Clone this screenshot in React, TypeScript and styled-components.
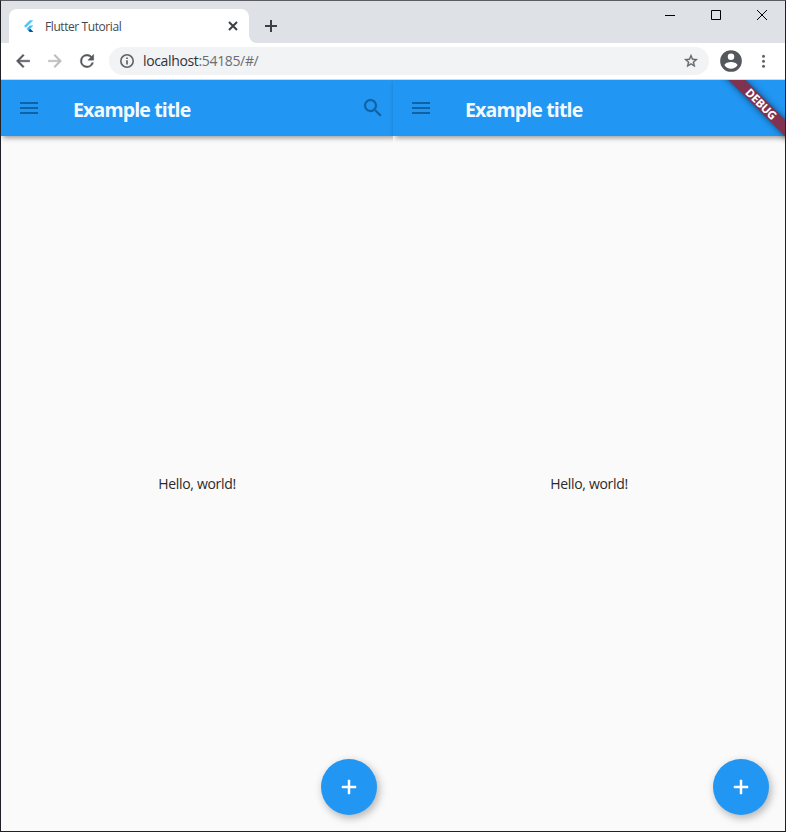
import React from "react";
import styled, { createGlobalStyle } from "styled-components";

const GlobalStyle = createGlobalStyle`
  * { box-sizing: border-box; }
  body { margin: 0; background: #fafafa; font-family: "Open Sans", "Noto Sans", sans-serif; }
`;

const Window = styled.div`
  width: 786px;
  height: 832px;
  display: flex;
  flex-direction: column;
  overflow: hidden;
  border: 1px solid #1e2026;
  border-top-color: #5b5c61;
`;

const TabStrip = styled.div`
  height: 42px;
  flex: none;
  display: flex;
  align-items: flex-end;
  background: #dee1e6;
`;

const Tab = styled.div`
  width: 240px;
  height: 34px;
  margin-left: 8px;
  display: flex;
  align-items: center;
  padding: 0 10px 0 13px;
  border-radius: 8px 8px 0 0;
  background: #fff;
`;

const TabCurve = styled.svg`
  width: 8px;
  height: 8px;
  display: block;
  flex: none;
`;

const TabTitle = styled.span`
  flex: 1;
  margin: 2px 0 0 9px;
  font-size: 12px;
  line-height: 16px;
  letter-spacing: -0.42px;
  color: #45494d;
  white-space: nowrap;
`;

const Glyph = styled.svg<{ $w: number; $h?: number }>`
  display: block;
  flex: none;
  width: ${(p) => p.$w}px;
  height: ${(p) => p.$h ?? p.$w}px;
`;

const NewTab = styled.div`
  margin-left: 8px;
  align-self: center;
  padding-top: 8px;
`;

const WindowControls = styled.div`
  margin-left: auto;
  align-self: flex-start;
  display: flex;
  height: 28px;
`;

const ControlButton = styled.div`
  width: 46px;
  display: flex;
  align-items: center;
  justify-content: center;
`;

const Toolbar = styled.div`
  height: 37px;
  flex: none;
  display: flex;
  align-items: center;
  padding: 0 12px;
  background: #fff;
  border-bottom: 1px solid #c9dcec;
`;

const NavButtons = styled.div`
  display: flex;
  gap: 12px;
`;

const AddressBar = styled.div`
  width: 600px;
  height: 28px;
  margin-left: 12px;
  padding: 0 10px;
  display: flex;
  align-items: center;
  border-radius: 14px;
  background: #f1f3f4;
`;

const Address = styled.span`
  flex: 1;
  margin-left: 8px;
  font-size: 14px;
  line-height: 20px;
  letter-spacing: -0.35px;
  color: #303236;
`;

const AddressPath = styled.span`
  color: #6a6e73;
`;

const Profile = styled.div`
  display: flex;
  align-items: center;
  margin-left: 9px;
  gap: 9px;
`;

const Page = styled.main`
  flex: 1;
  display: flex;
  background: #fafafa;
`;

const Pane = styled.section`
  position: relative;
  width: 392px;
  display: flex;
  flex-direction: column;
  background: #fafafa;
`;

const AppBar = styled.header`
  height: 56px;
  flex: none;
  display: flex;
  align-items: center;
  padding: 0 8px 0 16px;
  background: #2196f3;
  box-shadow: 2px 2px 5px rgba(0, 0, 0, 0.38);
  clip-path: inset(0 -1px -12px -6px);
`;

const Title = styled.h1`
  flex: 1;
  margin: 4px 0 0 32px;
  font-size: 19.5px;
  line-height: 28px;
  font-weight: 700;
  letter-spacing: -0.85px;
  color: #f2faff;
`;

const Content = styled.div`
  flex: 1;
  display: flex;
  align-items: center;
  justify-content: center;
  font-size: 14px;
  letter-spacing: -0.32px;
  color: #2a2a2a;
`;

const Fab = styled.div`
  position: absolute;
  right: 16px;
  bottom: 16px;
  width: 56px;
  height: 56px;
  display: flex;
  align-items: center;
  justify-content: center;
  border-radius: 50%;
  background: #2196f3;
  box-shadow: 2px 3px 8px rgba(0, 0, 0, 0.3);
`;

const BannerClip = styled.div`
  position: absolute;
  top: 0;
  right: 0;
  width: 72px;
  height: 72px;
  overflow: hidden;
`;

const Banner = styled.div`
  position: absolute;
  top: 18px;
  left: -2px;
  width: 100px;
  height: 12px;
  transform: rotate(45deg);
  background: #7f3350;
  box-shadow: 0 0 6px rgba(0, 0, 0, 0.5);
  color: #fff;
  font-size: 11.5px;
  line-height: 12px;
  font-weight: 700;
  letter-spacing: -0.25px;
  text-align: center;
`;

const FlutterLogo = () => (
  <Glyph $w={14} viewBox="0 0 14 14">
    <path d="M7.8 1.2 2 7l1.8 1.8 7.6-7.6z" fill="#54c5f8" />
    <path d="M7.8 6.6 4.6 9.7l3.2 3.2h3.6L8.2 9.7l3.2-3.1z" fill="#40bdf5" />
    <path d="m6.4 11.5 1.4 1.4h3.6L8.2 9.7z" fill="#01579b" />
  </Glyph>
);

interface MaterialProps {
  d: string;
  color: string;
  size?: number;
  weight?: number;
}

const Material = ({ d, size = 24, color, weight = 0 }: MaterialProps) => (
  <Glyph $w={size} viewBox="0 0 24 24" fill={color} stroke={color} strokeWidth={weight}>
    <path d={d} />
  </Glyph>
);

const icons = {
  back: "M20 11H7.83l5.59-5.59L12 4l-8 8 8 8 1.41-1.41L7.83 13H20v-2z",
  forward: "M12 4l-1.41 1.41L16.17 11H4v2h12.17l-5.58 5.59L12 20l8-8z",
  reload:
    "M17.65 6.35A7.96 7.96 0 0 0 12 4a8 8 0 1 0 7.73 10h-2.08A6 6 0 1 1 12 6c1.66 0 3.14.69 4.22 1.78L13 11h7V4l-2.35 2.35z",
  star: "M22 9.24l-7.19-.62L12 2 9.19 8.63 2 9.24l5.46 4.73L5.82 21 12 17.27 18.18 21l-1.63-7.03L22 9.24zM12 15.4l-3.76 2.27 1-4.28-3.32-2.88 4.38-.38L12 6.1l1.71 4.04 4.38.38-3.32 2.88 1 4.28L12 15.4z",
  account:
    "M12 2a10 10 0 1 0 0 20 10 10 0 0 0 0-20zm0 3a3 3 0 1 1 0 6 3 3 0 0 1 0-6zm0 14.2a7.2 7.2 0 0 1-6-3.22c.03-1.99 4-3.08 6-3.08s5.97 1.09 6 3.08a7.2 7.2 0 0 1-6 3.22z",
  menu: "M3 18h18v-2H3v2zm0-5h18v-2H3v2zm0-7v2h18V6H3z",
  search:
    "M15.5 14h-.79l-.28-.27A6.47 6.47 0 0 0 16 9.5 6.5 6.5 0 1 0 9.5 16c1.61 0 3.09-.59 4.23-1.57l.27.28v.79l5 4.99L20.49 19l-4.99-5zm-6 0a4.5 4.5 0 1 1 0-9 4.5 4.5 0 0 1 0 9z",
  add: "M19 13h-6v6h-2v-6H5v-2h6V5h2v6h6v2z",
};

const InfoIcon = () => (
  <Glyph $w={16} viewBox="0 0 16 16" fill="none" stroke="#5f6368">
    <circle cx="8" cy="8" r="6.2" strokeWidth="1.6" />
    <path d="M8 4.4v1.7M8 7.2v4.3" strokeWidth="1.7" />
  </Glyph>
);

const MoreIcon = () => (
  <Glyph $w={20} viewBox="0 0 20 20" fill="#5f6368">
    <circle cx="10.5" cy="5.3" r="1.5" />
    <circle cx="10.5" cy="10.3" r="1.5" />
    <circle cx="10.5" cy="15.3" r="1.5" />
  </Glyph>
);

const AppPane = ({ search, debug }: { search?: boolean; debug?: boolean }) => (
  <Pane>
    <AppBar>
      <Material d={icons.menu} color="#0f62a3" />
      <Title>Example title</Title>
      {search && <Material d={icons.search} color="#0f62a3" weight={0.2} />}
    </AppBar>
    <Content>Hello, world!</Content>
    <Fab>
      <Material d={icons.add} color="#fff" weight={0.5} />
    </Fab>
    {debug && (
      <BannerClip>
        <Banner>DEBUG</Banner>
      </BannerClip>
    )}
  </Pane>
);

export default function App() {
  return (
    <>
      <GlobalStyle />
      <Window>
        <TabStrip>
          <Tab>
            <FlutterLogo />
            <TabTitle>Flutter Tutorial</TabTitle>
            <Glyph $w={12} viewBox="0 0 12 12" stroke="#3c4043" strokeWidth="2">
              <path d="m2 2 8 8M10 2l-8 8" />
            </Glyph>
          </Tab>
          <TabCurve viewBox="0 0 8 8">
            <path d="M0 0a8 8 0 0 0 8 8H0z" fill="#fff" />
          </TabCurve>
          <NewTab>
            <Glyph $w={12} viewBox="0 0 12 12" stroke="#3c4043" strokeWidth="2">
              <path d="M0 6h12M6 0v12" />
            </Glyph>
          </NewTab>
          <WindowControls>
            <ControlButton>
              <Glyph $w={10} viewBox="0 0 10 10" stroke="#000">
                <path d="M0 5.5h10" />
              </Glyph>
            </ControlButton>
            <ControlButton>
              <Glyph $w={10} viewBox="0 0 10 10" stroke="#000" fill="none">
                <path d="M.5.5h9v9h-9z" />
              </Glyph>
            </ControlButton>
            <ControlButton>
              <Glyph $w={10} viewBox="0 0 10 10" stroke="#000">
                <path d="m0 0 10 10M10 0 0 10" />
              </Glyph>
            </ControlButton>
          </WindowControls>
        </TabStrip>
        <Toolbar>
          <NavButtons>
            <Material d={icons.back} size={20} color="#54585d" weight={0.5} />
            <Material d={icons.forward} size={20} color="#babcbe" weight={0.5} />
            <Material d={icons.reload} size={20} color="#54585d" weight={0.5} />
          </NavButtons>
          <AddressBar>
            <InfoIcon />
            <Address>
              localhost<AddressPath>:54185/#/</AddressPath>
            </Address>
            <Material d={icons.star} size={16} color="#5f6368" weight={0.5} />
          </AddressBar>
          <Profile>
            <Material d={icons.account} size={26} color="#54585d" />
            <MoreIcon />
          </Profile>
        </Toolbar>
        <Page>
          <AppPane search />
          <AppPane debug />
        </Page>
      </Window>
    </>
  );
}
